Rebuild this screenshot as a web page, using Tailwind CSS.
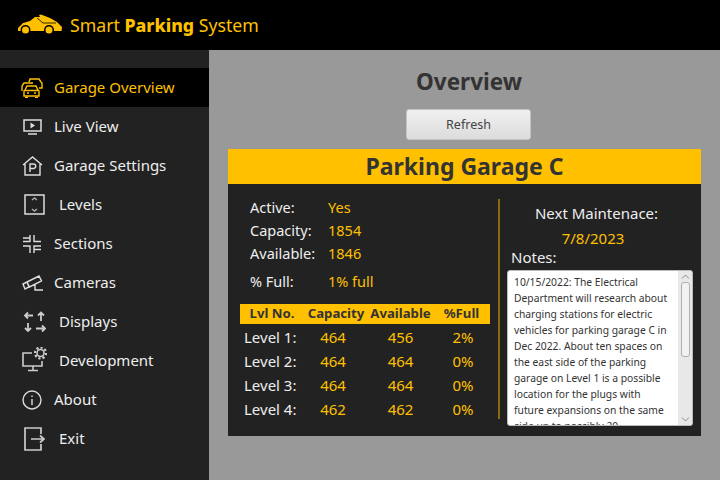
<!DOCTYPE html>
<html lang="en">
<head>
    <meta charset="UTF-8">
    <title>Smart Parking System</title>
    <script src="https://cdn.jsdelivr.net/npm/@tailwindcss/browser@4"></script>
</head>
<body class="w-[720px] h-[480px] overflow-hidden bg-[#999999] font-['Noto_Sans',sans-serif]">

    <header class="h-[50px] bg-black flex items-center pl-[18px] text-[#ffc000]">
        <svg class="w-[45px] h-[22px]" viewBox="0 0 45 22" fill="#ffc000">
            <path d="M0 17 L0 14 L5 9 L12 7 L17 3 L22 3 L21 1 L23 .5 L32 4 L39 8 L44 13 L43.5 17 Z"/>
            <path d="M19 4 L25 9 L38 9" fill="none" stroke="#000" stroke-width=".8"/>
            <circle cx="7.5" cy="16" r="5" fill="#000"/><circle cx="31" cy="16" r="5" fill="#000"/>
            <circle cx="7.5" cy="16" r="3.5"/><circle cx="31" cy="16" r="3.5"/>
        </svg>
        <h1 class="ml-[7px] text-[17.7px]">Smart <span class="font-extrabold">Parking</span> System</h1>
    </header>

    <div class="flex h-[430px]">
        <nav class="w-[209px] bg-[#222222] pt-[18px] text-[15px] text-[#eeeeee]">
            <a class="h-[39px] flex items-center bg-black text-[#ffc000]">
                <span class="w-[54px] flex justify-center pl-[10px]">
                    <svg class="w-[22px] h-[20px]" viewBox="0 0 22 20" fill="none" stroke="#ffc000" stroke-width="1.4">
                        <path d="M8 4 L9 1 H18 L20 4 L21 5 V10 H18"/><path d="M1 13 V8 L3 5 H12"/>
                        <path d="M4 12 L6 8 H15 L17 12 L18 13 V18 H3 V13 Z"/><path d="M4 12.5 H17 M6 15 H8 M13 15 H15 M4 19.5 H7 M14 19.5 H17"/>
                    </svg>
                </span>
                Garage Overview
            </a>
            <a class="h-[39px] flex items-center">
                <span class="w-[54px] flex justify-center pl-[10px]">
                    <svg class="w-[19px] h-[16px]" viewBox="0 0 19 16" fill="none" stroke="#dddddd" stroke-width="1.5">
                        <path d="M1 1 H18 V12 H1 Z M5 15 H14"/><path d="M7.5 3.5 L12 6.5 L7.5 9.5 Z" fill="#dddddd" stroke="none"/>
                    </svg>
                </span>
                Live View
            </a>
            <a class="h-[39px] flex items-center">
                <span class="w-[54px] flex justify-center pl-[10px]">
                    <svg class="w-[21px] h-[20px]" viewBox="0 0 21 20" fill="none" stroke="#dddddd" stroke-width="1.4">
                        <path d="M1 9 L10.5 1 L20 9 M3 8 V19 H18 V8"/><path d="M8 16 V8 H11.5 A2.2 2.2 0 0 1 11.5 12.5 H8"/>
                    </svg>
                </span>
                Garage Settings
            </a>
            <a class="h-[39px] flex items-center">
                <span class="w-[59px] flex justify-center pl-[10px]">
                    <svg class="w-[21px] h-[21px]" viewBox="0 0 21 21" fill="none" stroke="#dddddd" stroke-width="1.5">
                        <path d="M1 1 H20 V20 H1 Z"/><path d="M8 6 L10.5 4 L13 6 M8 15 L10.5 17 L13 15" stroke="#aaaaaa"/>
                    </svg>
                </span>
                Levels
            </a>
            <a class="h-[39px] flex items-center">
                <span class="w-[54px] flex justify-center pl-[10px]">
                    <svg class="w-[18px] h-[18px]" viewBox="0 0 18 18" fill="none" stroke="#dddddd" stroke-width="1.4">
                        <path d="M0 3 H7 M0 6.5 H7 M7 0 V7 M11 0 V7 M11 6.5 H18 M0 11 H7 V18 M11 18 V11 H18 M11 14.5 H18"/>
                    </svg>
                </span>
                Sections
            </a>
            <a class="h-[39px] flex items-center">
                <span class="w-[54px] flex justify-center pl-[10px]">
                    <svg class="w-[21px] h-[16px]" viewBox="0 0 21 16" fill="none" stroke="#dddddd" stroke-width="1.4">
                        <path d="M5 7 L17 1 L19.5 6 L7.5 12 Z M1 9 L5 7 L7 12 L3 14 Z M13 9.5 V15 H21"/>
                    </svg>
                </span>
                Cameras
            </a>
            <a class="h-[39px] flex items-center">
                <span class="w-[59px] flex justify-center pl-[10px]">
                    <svg class="w-[23px] h-[22px]" viewBox="0 0 23 22" fill="none" stroke="#cccccc" stroke-width="1.8">
                        <path d="M10 4.5 H2 M5 1.5 L2 4.5 L5 7.5 M18 10 V1.5 M15 4.5 L18 1.5 L21 4.5 M5 12 V20 M2 17 L5 20 L8 17 M13 17.5 H22 M19 14.5 L22 17.5 L19 20.5"/>
                    </svg>
                </span>
                Displays
            </a>
            <a class="h-[39px] flex items-center">
                <span class="w-[59px] flex justify-center pl-[10px]">
                    <svg class="-mt-[3px] w-[26px] h-[25px]" viewBox="0 0 26 25" fill="none" stroke="#cccccc" stroke-width="1.6">
                        <path d="M10 6 H1 V19 H20 V14 M11 19 V23 M6 23.5 H16"/>
                        <circle cx="18.5" cy="6" r="3.5"/><circle cx="18.5" cy="6" r="5.5" stroke-width="2.2" stroke-dasharray="2.2 2"/>
                    </svg>
                </span>
                Development
            </a>
            <a class="h-[39px] flex items-center">
                <span class="w-[54px] flex justify-center pl-[10px]">
                    <svg class="w-[20px] h-[20px]" viewBox="0 0 20 20" fill="none" stroke="#dddddd" stroke-width="1.4">
                        <circle cx="10" cy="10" r="9"/><path d="M10 9 V15 M10 5.5 V7"/>
                    </svg>
                </span>
                About
            </a>
            <a class="h-[39px] flex items-center">
                <span class="w-[59px] flex justify-center pl-[10px]">
                    <svg class="w-[22px] h-[24px]" viewBox="0 0 22 24" fill="none" stroke="#cccccc" stroke-width="1.7">
                        <path d="M17 7 V1 H1 V23 H17 V17 M7 12 H20 M16 8.5 L20 12 L16 15.5"/>
                    </svg>
                </span>
                Exit
            </a>
        </nav>

        <main class="flex-1 pl-[19px] pr-[19px] flex flex-col items-center">
            <h2 class="ml-[9px] mt-[15px] h-[34px] text-[22.5px] font-bold text-[#333333] leading-[34px]">Overview</h2>
            <button class="ml-[8px] mt-[10px] pt-px w-[125px] h-[31px] rounded-[3px] border border-[#c4c4c4] bg-linear-to-b from-[#f0f0f0] to-[#dcdcdc] text-[12.5px] text-[#444444]">Refresh</button>
            <section class="mt-[9px] w-[473px] h-[287px] bg-[#222222]">
                <div class="h-[35px] bg-[#ffc000] text-center text-[23px] font-bold leading-[35px] text-[#333333]">Parking Garage C</div>
                <div class="flex">
                    <div class="w-[270px] pl-[12px]">
                        <dl class="pl-[10px] pt-[12px] text-[14.5px] text-[#eeeeee]">
                            <div class="flex h-[23px] items-center"><dt class="w-[78px]">Active:</dt><dd class="text-[#ffc000]">Yes</dd></div>
                            <div class="flex h-[23px] items-center"><dt class="w-[78px]">Capacity:</dt><dd class="text-[#ffc000]">1854</dd></div>
                            <div class="flex h-[23px] items-center"><dt class="w-[78px]">Available:</dt><dd class="text-[#ffc000]">1846</dd></div>
                            <div class="flex h-[23px] items-center mt-[5px]"><dt class="w-[78px]">% Full:</dt><dd class="text-[#ffc000]">1% full</dd></div>
                        </dl>
                        <table class="mt-[11px] w-[250px] table-fixed text-[15px] text-[#ffc000]">
                            <thead class="bg-[#ffc000] text-[#333333] text-[13.2px]">
                                <tr class="h-[20px]">
                                    <th class="w-[64px] font-bold">Lvl No.</th>
                                    <th class="w-[64px] font-bold">Capacity</th>
                                    <th class="w-[65px] font-bold">Available</th>
                                    <th class="w-[57px] font-bold">%Full</th>
                                </tr>
                            </thead>
                            <tbody class="text-center">
                                <tr class="h-[1px]"></tr>
                                <tr class="h-[24px]"><td class="pl-[4px] text-left text-[#eeeeee]">Level 1:</td><td class="pr-[6px]">464</td><td>456</td><td class="pl-[3px]">2%</td></tr>
                                <tr class="h-[24px]"><td class="pl-[4px] text-left text-[#eeeeee]">Level 2:</td><td class="pr-[6px]">464</td><td>464</td><td class="pl-[3px]">0%</td></tr>
                                <tr class="h-[24px]"><td class="pl-[4px] text-left text-[#eeeeee]">Level 3:</td><td class="pr-[6px]">464</td><td>464</td><td class="pl-[3px]">0%</td></tr>
                                <tr class="h-[24px]"><td class="pl-[4px] text-left text-[#eeeeee]">Level 4:</td><td class="pr-[6px]">462</td><td>462</td><td class="pl-[3px]">0%</td></tr>
                            </tbody>
                        </table>
                    </div>
                    <div class="mt-[15px] h-[220px] border-l-2 border-[#8a6c0c]"></div>
                    <div class="w-[201px] flex flex-col">
                        <p class="mt-[18px] pr-[8px] text-center text-[15px] leading-[22px] text-[#eeeeee]">Next Maintenace:</p>
                        <p class="mt-[3px] pr-[15px] text-center text-[15px] leading-[22px] text-[#ffc000]">7/8/2023</p>
                        <p class="mt-[-2px] pl-[11px] text-[15px] leading-[20px] text-[#eeeeee]">Notes:</p>
                        <div class="mt-[3px] ml-[7px] w-[186px] h-[156px] bg-white rounded-[3px] border border-[#bbbbbb] flex overflow-hidden">
                            <p class="flex-1 pl-[6px] pt-[3px] whitespace-nowrap text-[10.3px] leading-[16px] text-[#333333]">10/15/2022: The Electrical<br>Department will research about<br>charging stations for electric<br>vehicles for parking garage C in<br>Dec 2022. About ten spaces on<br>the east side of the parking<br>garage on Level 1 is a possible<br>location for the plugs with<br>future expansions on the same<br>side up to possibly 20</p>
                            <div class="w-[14px] shrink-0 bg-[#e8e8e8] flex flex-col items-center">
                                <svg class="mt-[3px] w-[9px] h-[5px]" viewBox="0 0 9 5" fill="none" stroke="#888888"><path d="M1 4.5 L4.5 1 L8 4.5"/></svg>
                                <div class="mt-[3px] w-[9px] h-[75px] rounded-[3px] bg-[#f2f2f2] border border-[#b0b0b0]"></div>
                                <svg class="mt-auto mb-[3px] w-[9px] h-[5px]" viewBox="0 0 9 5" fill="none" stroke="#888888"><path d="M1 .5 L4.5 4 L8 .5"/></svg>
                            </div>
                        </div>
                    </div>
                </div>
            </section>
        </main>
    </div>

</body>
</html>
